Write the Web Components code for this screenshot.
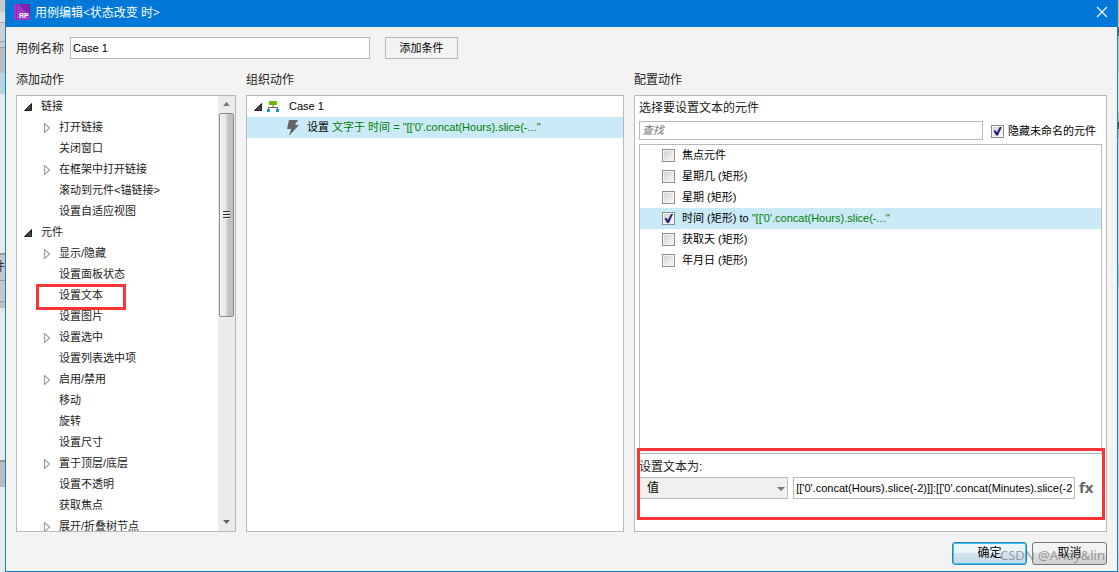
<!DOCTYPE html>
<html lang="zh-CN">
<head>
<meta charset="utf-8">
<title>用例编辑</title>
<style>
html, body { margin: 0; }
body {
  font: 11px/21px "Liberation Sans", "Noto Sans CJK SC", sans-serif;
  color: #000; background: #f3f3f3;
  --line: #b9b9b9; --mark: #fb3535; --pick: #cbeaf7; --code: #008000;
}
</style>
</head>
<body>
<case-dialog></case-dialog>
<script>
const define = (name, html, setup) => {
  const template = document.createElement('template');
  template.innerHTML = html;
  customElements.define(name, class extends HTMLElement {
    constructor() {
      super();
      this.attachShadow({ mode: 'open' }).append(template.content.cloneNode(true));
    }
    connectedCallback() { if (setup) setup(this, this.shadowRoot); }
  });
};

/* A strip of the application window behind the dialog */
define('back-window', `
<style>
:host { display: block; overflow: hidden; flex: none; width: 5px; color: #333; font-size: 12px; line-height: 16px;
  background: linear-gradient(#c9c9c9 0 12px, #dedede 12px 22px, #aaa 22px 23px, #cfcfcf 23px 41px, #999 41px 42px, #ccc 42px 47px, #999 47px 48px,
    #bdbdbd 48px 73px, #b4d5e0 73px 94px, #e9e9e9 94px 253px, #999 253px 255px, #c6c6c6 255px 280px, #999 280px 281px,
    #c6c6c6 281px 301px, #999 301px 302px, #c0c0c0 302px 308px, #e9e9e9 308px 460px, #999 460px 462px, #bcbcbc 462px 487px, #e9e9e9 487px); }
:host([right]) { width: 1px;
  background: linear-gradient(#bbb 0 27px, #555 27px 36px, #ccc 36px 73px, #ddd 73px 112px, #bbb 112px 122px, #444 122px 129px, #bbb 129px 138px, #ccd3d8 138px 265px, #a9c6d6 265px 287px, #cfd6da 287px); }
div { display: flex; justify-content: flex-end; padding-top: 259px; }
</style><div><slot></slot></div>`);

define('title-bar', `
<style>
:host { display: flex; align-items: center; box-sizing: border-box; height: 27px; padding: 0 9px 3px 8px; background: #0078d7; color: #fff; font-size: 12px; font-family: "Open Sans", "Noto Sans CJK SC", sans-serif; }
.logo { display: block; margin-right: 5px; }
h1 { flex: 1; margin: 0; font: inherit; }
button { display: block; border: 0; padding: 0; background: none; color: inherit; height: 12px; }
button svg { display: block; }
</style>
<svg class="logo" width="16" height="16" viewBox="0 0 16 16"><path fill="#a238c8" d="M0 0h16v16H0z"/><path fill="#7d25a8" d="M4 0h12v12z"/><path fill="#8a2cb4" d="M2 0h1v16H2z"/><text x="5" y="14" font-family="Liberation Sans" font-size="7" font-weight="bold" fill="#fff">RP</text></svg>
<h1><slot></slot></h1>
<button aria-label="关闭"><svg width="12" height="12" viewBox="0 0 12 12"><path d="M1 1l10 10M11 1L1 11" stroke="#fff" stroke-width="1.2"/></svg></button>`);

define('work-panel', `
<style>
:host { display: flex; flex-direction: column; min-width: 0; min-height: 0; }
h2 { margin: 0 0 7px; font: 12px/16px "Liberation Sans", "Noto Sans CJK SC", sans-serif; color: #222; }
.box { flex: 1; min-height: 0; display: flex; flex-direction: column; border: 1px solid var(--line); background: #fff; }
</style>
<h2></h2><div class="box"><slot></slot></div>`,
(el, root) => { root.querySelector('h2').textContent = el.getAttribute('heading'); });

define('tree-item', `
<style>
:host { display: flex; align-items: center; height: 21px; padding-left: 26px; position: relative; white-space: nowrap; }
:host([root]) { padding-left: 6px; }
.arrow { display: block; flex: none; width: 10px; height: 10px; margin-right: 6px; }
:host([root]) .arrow { margin-right: 8px; }
:host([marked])::after { content: ""; position: absolute; left: 19px; top: -1px; width: 84px; height: 20px; border: 3px solid var(--mark); }
</style>
<svg class="arrow" viewBox="0 0 10 10"></svg><slot></slot>`,
(el, root) => {
  const svg = root.querySelector('svg');
  if (el.hasAttribute('root')) svg.innerHTML = '<path d="M8.5 1.5v7h-7z" fill="#444" stroke="#222"/>';
  else if (el.hasAttribute('closed')) svg.innerHTML = '<path d="M1.5 .5v9l5-4.500z" fill="#fff" stroke="#a0a0a0" stroke-width="1.200"/>';
});

define('scroll-rail', `
<style>
:host { display: flex; flex-direction: column; align-items: center; flex: none; width: 17px; background: #ebebeb; }
.thumb { flex: 0 1 202px; width: 13px; border: 1px solid #8f8f8f; border-radius: 2px; background: linear-gradient(90deg, #f5f5f5, #e6e6e8 45%, #c4c4c8 60%, #bdbdc2);
  display: flex; flex-direction: column; align-items: center; justify-content: center; gap: 1px; }
i { width: 7px; height: 1px; background: #333; border-bottom: 1px solid #eee; }
svg { display: block; flex: none; }
.fill { flex: 1; }
</style>
<svg width="17" height="17"><path d="M5 10l3.500-4 3.500 4z" fill="#777"/></svg>
<div class="thumb"><i></i><i></i><i></i></div><div class="fill"></div>
<svg width="17" height="17"><path d="M5 6l3.500 4 3.500-4z" fill="#666"/></svg>`);

define('action-tree', `
<style>
:host { display: flex; flex: 1; min-height: 0; }
.rows { flex: 1; min-width: 0; overflow: hidden; color: #222; }
</style>
<div class="rows">
<tree-item root>链接</tree-item>
<tree-item closed>打开链接</tree-item>
<tree-item>关闭窗口</tree-item>
<tree-item closed>在框架中打开链接</tree-item>
<tree-item>滚动到元件&lt;锚链接&gt;</tree-item>
<tree-item>设置自适应视图</tree-item>
<tree-item root>元件</tree-item>
<tree-item closed>显示/隐藏</tree-item>
<tree-item>设置面板状态</tree-item>
<tree-item marked>设置文本</tree-item>
<tree-item>设置图片</tree-item>
<tree-item closed>设置选中</tree-item>
<tree-item>设置列表选中项</tree-item>
<tree-item closed>启用/禁用</tree-item>
<tree-item>移动</tree-item>
<tree-item>旋转</tree-item>
<tree-item>设置尺寸</tree-item>
<tree-item closed>置于顶层/底层</tree-item>
<tree-item>设置不透明</tree-item>
<tree-item>获取焦点</tree-item>
<tree-item closed>展开/折叠树节点</tree-item>
</div><scroll-rail></scroll-rail>`);

define('case-outline', `
<style>
:host { display: block; }
div { display: flex; align-items: center; height: 21px; white-space: nowrap; }
.case { padding-left: 6px; }
.case svg { margin-right: 4px; } .case .net { margin-right: 10px; }
.action { padding-left: 39px; background: var(--pick); }
.action svg { margin-right: 7px; }
span { color: var(--code); }
svg { display: block; flex: none; }
</style>
<div class="case"><svg width="10" height="10"><path d="M8.500 1.500v7h-7z" fill="#444" stroke="#222"/></svg>
<svg class="net" width="12" height="12" viewBox="0 0 12 12"><path d="M2 0h8v4H2z" fill="#6cbd00"/><path d="M6 4v2M1.500 8V6.500h9V8" stroke="#666" fill="none"/><path d="M0 8h3v3H0zM9 8h3v3H9z" fill="#1a9ad7"/></svg>Case 1</div>
<div class="action"><svg width="14" height="16" viewBox="0 0 14 16"><path d="M3 0h9L9 5h4L3 16l2-7H1z" fill="#666"/></svg><p>设置 <span>文字于 时间 = "[['0'.concat(Hours).slice(-..."</span></p></div>`);

define('check-row', `
<style>
:host { display: block; flex: none; white-space: nowrap; }
label { display: flex; align-items: center; gap: 4px; height: 21px; }
:host([row]) label { gap: 7px; padding-left: 22px; }
:host([selected]) { background: var(--pick); }
input { appearance: none; position: relative; flex: none; box-sizing: border-box; width: 13px; height: 13px; margin: 0; border: 1px solid #8e8f8f; background: linear-gradient(135deg, #cfcfd6, #fafafa); box-shadow: inset 0 0 0 1px #f4f4f4; }
input:checked::before { content: ""; position: absolute; inset: 1px; background: #272772; clip-path: polygon(5% 50%, 25% 42%, 43% 65%, 78% 0, 100% 0, 55% 100%, 35% 100%); }
</style>
<label><input type="checkbox"><span><slot></slot></span></label>`,
(el, root) => { root.querySelector('input').checked = el.hasAttribute('checked'); });

define('config-form', `
<style>
:host { display: flex; flex: 1; min-height: 0; flex-direction: column; padding: 3px 4px 0; }
h3, .to { margin: 0; font: 12px/18px "Liberation Sans", "Noto Sans CJK SC", sans-serif; color: #222; }
.search { display: flex; align-items: center; gap: 8px; height: 22px; padding: 2px 6px 3px 0; }
.search check-row { padding-top: 2px; }
input, select { box-sizing: border-box; min-width: 0; margin: 0; border: 1px solid var(--line); border-radius: 0; background: #fff; font: 11px/17px "Liberation Sans", "Noto Sans CJK SC", sans-serif; color: #000; }
.search input { flex: 1; height: 19px; padding: 0 2px; font-style: italic; }
input::placeholder { color: #777; opacity: 1; }
.list { flex: 1; min-height: 0; border: 1px solid var(--line); }
.value { position: relative; flex: none; height: 77px; }
.value::after { content: ""; position: absolute; inset: -6px -3px 11px -2px; border: 3px solid var(--mark); pointer-events: none; }
.to { display: block; padding-top: 3px; line-height: 20px; }
.fields { display: flex; align-items: center; }
.pick { position: relative; flex: 150 1 0; display: flex; margin-right: 5px; }
select { appearance: none; width: 100%; height: 22px; padding: 0 7px; background: #f0f0f0; font-size: 12px; }
.pick svg { position: absolute; right: 3px; top: 10px; pointer-events: none; }
.fields input { flex: 281 1 0; height: 22px; padding: 0 2px; }
/* width and gutter shares of the row: 150 : 281 */
.fields .pick { flex-grow: 152; }
button { flex: none; width: 27px; border: 0; padding: 0 5px 2px 4px; background: none; color: #666; font: bold 15px/18px "Open Sans", sans-serif; text-align: left; }
</style>
<h3>选择要设置文本的元件</h3>
<div class="search"><input type="search" placeholder="查找" aria-label="查找"><check-row checked>隐藏未命名的元件</check-row></div>
<div class="list">
<check-row row>焦点元件</check-row>
<check-row row>星期几 (矩形)</check-row>
<check-row row>星期 (矩形)</check-row>
<check-row row checked selected>时间 (矩形) to <span style="color:var(--code)">"[['0'.concat(Hours).slice(-..."</span></check-row>
<check-row row>获取天 (矩形)</check-row>
<check-row row>年月日 (矩形)</check-row>
</div>
<div class="value"><label class="to" for="kind">设置文本为:</label>
<div class="fields"><div class="pick"><select id="kind"><option>值</option></select><svg width="8" height="5"><path d="M0 0h8L4 4z" fill="#777"/></svg></div>
<input aria-label="值" value="[['0'.concat(Hours).slice(-2)]]:[['0'.concat(Minutes).slice(-2)]]"><button>fx</button></div></div>`);

define('dialog-actions', `
<style>
:host { display: flex; justify-content: flex-end; gap: 5px; position: relative; padding: 10px 0 6px; }
button { box-sizing: border-box; width: 75px; height: 23px; padding: 0; border: 1px solid #777; border-radius: 3px; color: #000; background: linear-gradient(#f3f3f3 0 48%, #dedede 50%, #d0d0d0); font: 12px/21px "Liberation Sans", "Noto Sans CJK SC", sans-serif; }
.ok { border-color: #3c7fb1; box-shadow: inset 0 0 0 1px #35c5ef; background: linear-gradient(#edf5f9 0 48%, #d2e4ed 50%, #c3dbe7); }
.credit { position: absolute; right: 2px; top: 15px; color: rgba(125,125,125,.75); font: 13px/16px "Noto Sans", sans-serif; pointer-events: none; }
</style>
<button class="ok">确定</button><button>取消</button><span class="credit">CSDN @Andy&amp;lin</span>`);

define('case-dialog', `
<style>
:host { display: flex; height: 100vh; }
main { flex: 1; min-width: 0; box-sizing: border-box; display: flex; flex-direction: column; border: 1px solid #1b7fd0; border-top: 0; background: #f3f3f3; }
.body { flex: 1; min-height: 0; display: flex; flex-direction: column; padding: 10px 10px 0; }
.name { display: flex; align-items: center; gap: 6px; }
.name label { padding-top: 2px; color: #222; font-size: 12px; line-height: 20px; }
.name input { box-sizing: border-box; width: 300px; height: 22px; margin: 0; padding: 0 2px; border: 1px solid var(--line); font: 11px/20px "Liberation Sans", "Noto Sans CJK SC", sans-serif; }
.name button { box-sizing: border-box; width: 73px; height: 22px; margin-left: 9px; padding: 0; border: 1px solid var(--line); background: #f3f3f3; color: #000; font: 11px/18px "Liberation Sans", "Noto Sans CJK SC", sans-serif; }
.columns { flex: 1; min-height: 0; display: grid; grid-template: minmax(0, 1fr) / 220px minmax(0, 378fr) minmax(0, 473fr); gap: 10px; padding-top: 13px; }
</style>
<back-window>件</back-window>
<main>
<title-bar>用例编辑&lt;状态改变 时&gt;</title-bar>
<div class="body">
<div class="name"><label for="name">用例名称</label><input id="name" value="Case 1"><button>添加条件</button></div>
<div class="columns">
<work-panel heading="添加动作"><action-tree></action-tree></work-panel>
<work-panel heading="组织动作"><case-outline></case-outline></work-panel>
<work-panel heading="配置动作"><config-form></config-form></work-panel>
</div>
<dialog-actions></dialog-actions>
</div>
</main>
<back-window right></back-window>`);
</script>
</body>
</html>
